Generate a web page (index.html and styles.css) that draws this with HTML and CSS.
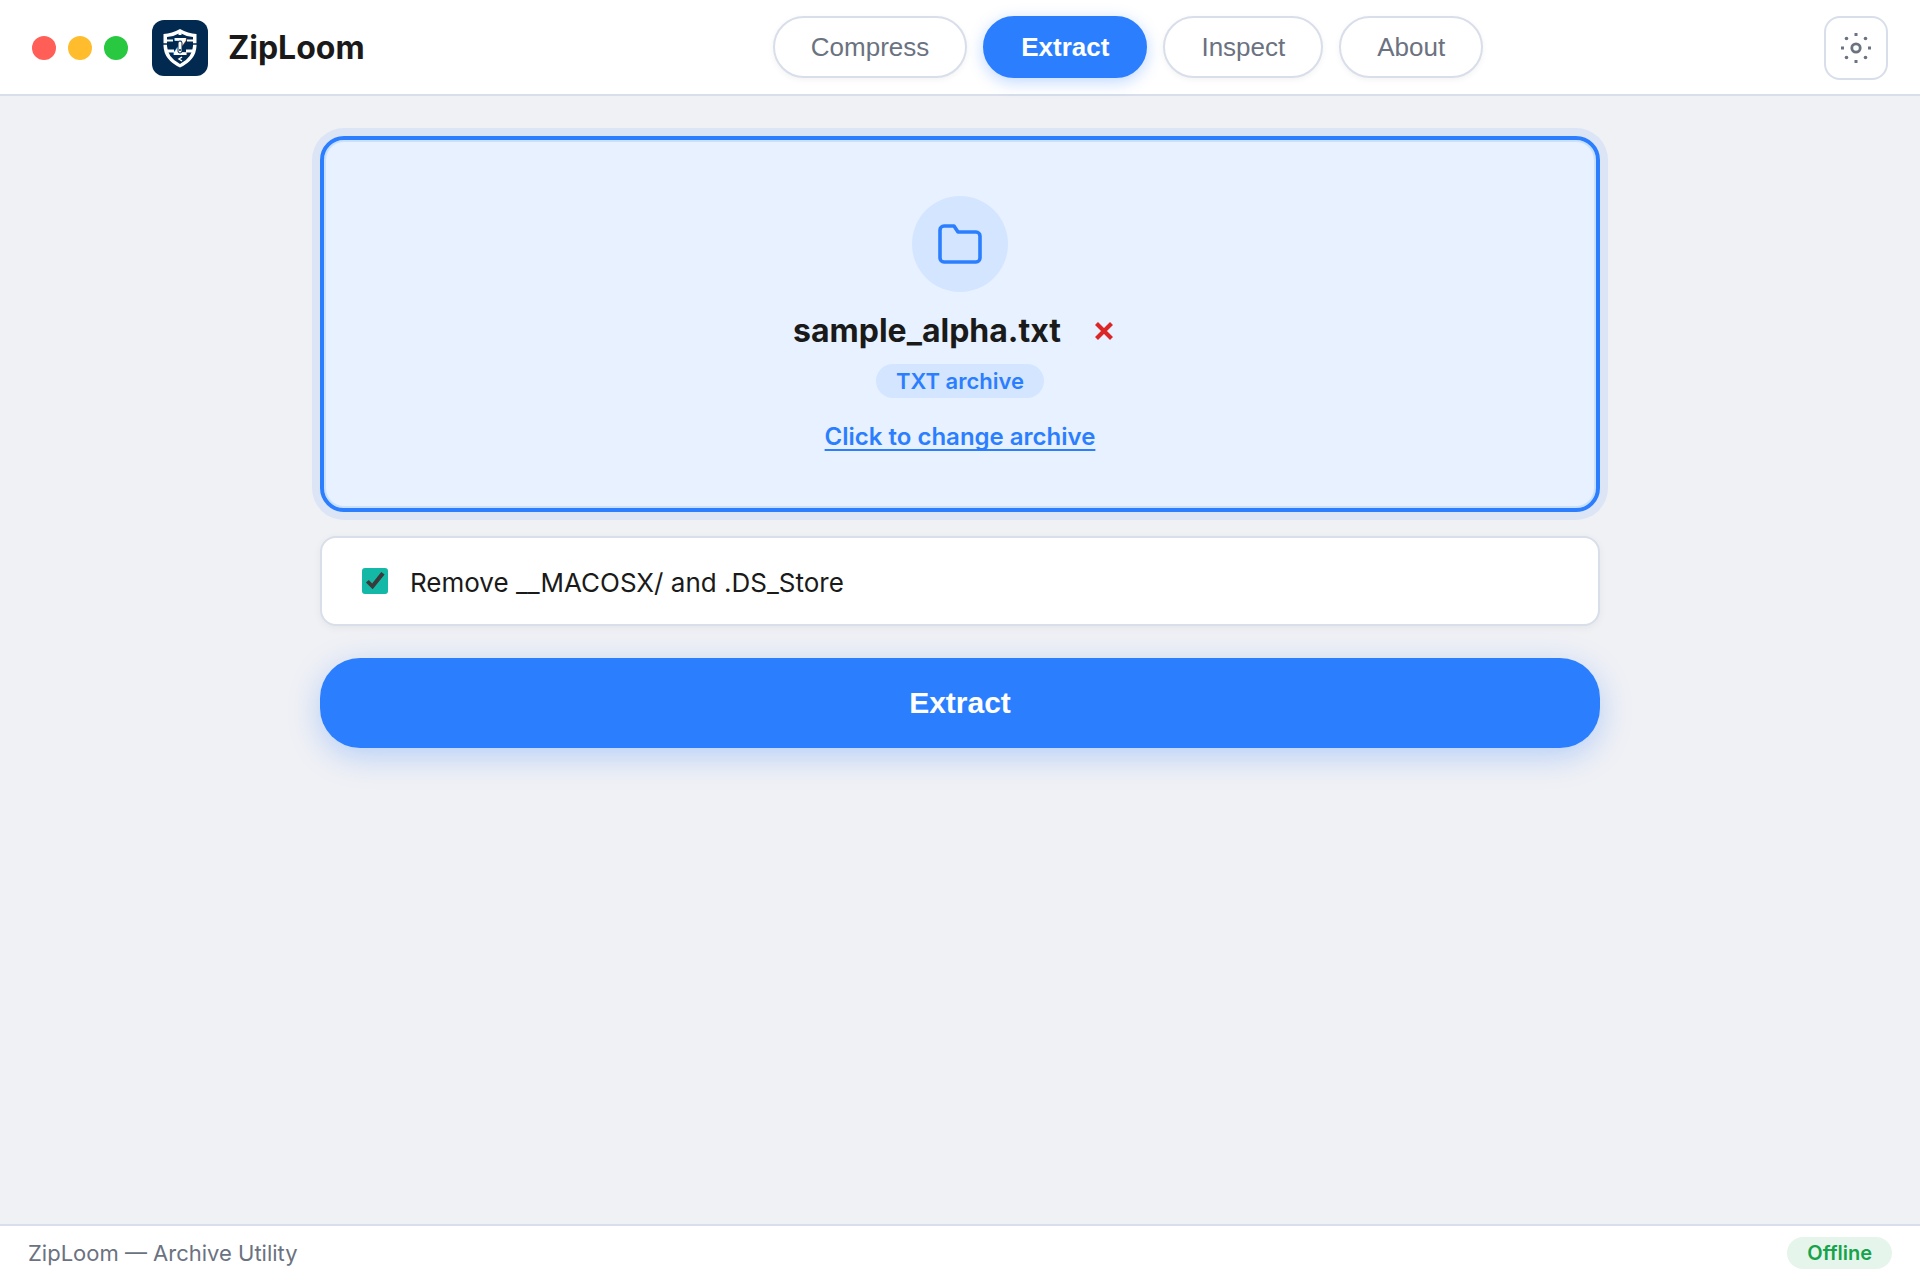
FILE: index.html
```
<!DOCTYPE html>
<html lang="en">

<head>
	<meta charset="UTF-8">
	<meta name="viewport" content="width=device-width, initial-scale=1">
	<title>ZipLoom</title>

	<link rel="stylesheet" href="styles.css">
</head>

<body>

	<header class="topbar">
		<div class="brand">
			<div class="lights">
				<span class="light red"></span>
				<span class="light yellow"></span>
				<span class="light green"></span>
			</div>
			<svg class="logo" viewBox="0 0 56 56" aria-hidden="true">
				<rect width="56" height="56" rx="12" fill="#022a50" />
				<path d="M28 9 Q36 13.500 44.500 14 V26 Q44 40 28 47.500 Q12 40 11.500 26 V14 Q20 13.500 28 9Z" fill="#fff" />
				<path d="M28 13 Q34 16.500 41 17 V26 Q40.500 37.500 28 44 Q15.500 37.500 15 26 V17 Q22 16.500 28 13Z" fill="#022a50" />
				<path d="M28 10v5M15 31h7M34 31h7" stroke="#fff" stroke-width="3" />
				<path d="M11 24h8M37 24h8" stroke="#022a50" stroke-width="1.500" />
				<path d="M15 20.500h6M35 20.500h6" stroke="#fff" stroke-width="2" />
				<text x="28" y="35" class="logo-letter">Z</text>
				<rect x="26" y="21" width="4" height="12" rx="2" fill="#fff" stroke="#022a50" stroke-width="1" />
				<circle cx="28" cy="30" r="1" fill="#022a50" />
				<path d="M30 37l-3 2 3 2" fill="none" stroke="#fff" stroke-width="1.500" />
			</svg>
			<h1>ZipLoom</h1>
		</div>

		<nav class="tabs">
			<button type="button">Compress</button>
			<button type="button" class="active">Extract</button>
			<button type="button">Inspect</button>
			<button type="button">About</button>
		</nav>

		<button type="button" class="settings" aria-label="Settings">
			<svg viewBox="0 0 32 32" width="32" height="32">
				<circle cx="16" cy="16" r="4.200" fill="none" stroke="#6b7280" stroke-width="2.800" />
				<g fill="#6b7280">
					<rect x="14.500" y="1" width="3" height="3" />
					<rect x="14.500" y="28" width="3" height="3" />
					<rect x="1" y="14.500" width="3" height="3" />
					<rect x="28" y="14.500" width="3" height="3" />
					<circle cx="6.500" cy="6.500" r="1.800" />
					<circle cx="25.500" cy="6.500" r="1.800" />
					<circle cx="6.500" cy="25.500" r="1.800" />
					<circle cx="25.500" cy="25.500" r="1.800" />
				</g>
			</svg>
		</button>
	</header>

	<main>
		<section class="dropzone">
			<div class="folder">
				<svg viewBox="0 0 24 24" width="48" height="48">
					<path d="M22 19a2 2 0 0 1-2 2H4a2 2 0 0 1-2-2V5a2 2 0 0 1 2-2h5l2 3h9a2 2 0 0 1 2 2z" fill="none" stroke="#2b7fff" stroke-width="1.800" stroke-linejoin="round" />
				</svg>
			</div>
			<div class="file">
				<span class="filename">sample_alpha.txt</span>
				<button type="button" class="remove" aria-label="Remove file">
					<svg viewBox="0 0 18 18" width="18" height="18">
						<path d="M1.500 1.500l15 15M16.500 1.500l-15 15" stroke="#dc2626" stroke-width="4.200" />
					</svg>
				</button>
			</div>
			<span class="type">TXT archive</span>
			<a href="#" class="change">Click to change archive</a>
		</section>

		<div class="options">
			<input type="checkbox" id="clean" checked>
			<label for="clean">Remove __MACOSX/ and .DS_Store</label>
		</div>

		<button type="button" class="submit">Extract</button>
	</main>

	<footer>
		<span>ZipLoom — Archive Utility</span>
		<span class="status">Offline</span>
	</footer>

</body>

</html>
```
FILE: styles.css
```
* {
	box-sizing: border-box;
}

body {
	display: flex;
	flex-direction: column;
	min-height: 100vh;
	margin: 0;
	background-color: #f0f1f5;
	color: #1a1a1a;
	font-family: Inter, "Liberation Sans", sans-serif;
}

button {
	font-family: "Liberation Sans", Arial, sans-serif;
	cursor: pointer;
}

svg {
	display: block;
}

.topbar {
	display: flex;
	align-items: center;
	padding: 16px 32px 14px;
	background-color: #fff;
	border-bottom: 2px solid #d8deea;
}

.brand {
	display: flex;
	align-items: center;
	gap: 20px;
	min-width: 400px;
}

.lights {
	display: flex;
	gap: 12px;
	margin-right: 4px;
}

.light {
	width: 24px;
	height: 24px;
	border-radius: 50%;
}

.red {
	background-color: #ff5f57;
}

.yellow {
	background-color: #ffbd2e;
}

.green {
	background-color: #28c940;
}

.logo {
	width: 56px;
	height: 56px;
}

.logo-letter {
	font-family: "Liberation Sans", sans-serif;
	font-size: 23px;
	font-weight: bold;
	fill: #fff;
	text-anchor: middle;
}

h1 {
	margin: 0;
	font-size: 32px;
	line-height: 40px;
	font-weight: 700;
}

.tabs {
	display: flex;
	flex: 1;
	justify-content: center;
	align-self: flex-start;
	gap: 16px;
}

.tabs button {
	padding: 14px 36px;
	font-size: 26px;
	line-height: 30px;
	color: #6b7280;
	background-color: #fff;
	border: 2px solid #d8deea;
	border-radius: 32px;
	box-shadow: 0 2px 6px rgba(0, 0, 0, 0.05);
}

.tabs .active {
	font-weight: bold;
	color: #fff;
	background-color: #2b7fff;
	border-color: #2b7fff;
	box-shadow: 0 4px 16px rgba(43, 127, 255, 0.3);
}

.settings {
	display: flex;
	align-items: center;
	justify-content: center;
	width: 64px;
	height: 64px;
	padding: 0;
	background-color: #fff;
	border: 2px solid #d8deea;
	border-radius: 16px;
}

main {
	display: flex;
	flex: 1;
	flex-direction: column;
	width: 100%;
	max-width: 1344px;
	margin: 0 auto;
	padding: 40px 32px;
}

.dropzone {
	display: flex;
	flex-direction: column;
	align-items: center;
	padding: 56px;
	background-color: #e7f1ff;
	border: 4px solid #2b7fff;
	border-radius: 24px;
	box-shadow: 0 0 0 8px rgba(43, 127, 255, 0.1), inset 0 0 0 2px rgba(43, 127, 255, 0.15);
}

.folder {
	display: flex;
	align-items: center;
	justify-content: center;
	width: 96px;
	height: 96px;
	border-radius: 50%;
	background-color: #d4e5ff;
}

.file {
	display: flex;
	align-items: center;
	gap: 20px;
	margin: 19px 0 13px;
}

.filename {
	font-size: 32px;
	line-height: 40px;
	font-weight: 700;
}

.remove {
	padding: 11px 14px;
	background: none;
	border: 0;
}

.type {
	padding: 4px 20px;
	font-size: 22px;
	line-height: 26px;
	font-weight: 600;
	color: #2b7fff;
	background-color: #d4e5ff;
	border-radius: 20px;
}

.change {
	margin-top: 24px;
	font-size: 24px;
	line-height: 30px;
	font-weight: 600;
	color: #2b7fff;
	text-decoration-thickness: 2px;
	text-underline-offset: 4px;
	text-decoration-skip-ink: none;
}

.options {
	display: flex;
	align-items: center;
	gap: 22px;
	margin-top: 24px;
	padding: 26px 40px;
	background-color: #fff;
	border: 2px solid #d8deea;
	border-radius: 16px;
	box-shadow: 0 2px 8px rgba(0, 0, 0, 0.05);
}

.options input {
	appearance: none;
	width: 26px;
	height: 26px;
	margin: 0;
	border-radius: 3px;
	background-color: #14b8a6;
}

.options input:checked::before {
	content: "";
	display: block;
	width: 26px;
	height: 26px;
	background-color: #3a3a3a;
	clip-path: polygon(15% 56%, 26% 46%, 39% 60%, 74% 15%, 87% 25%, 41% 82%);
}

.options label {
	padding-top: 4px;
	font-size: 26px;
	line-height: 30px;
}

.submit {
	margin-top: 32px;
	padding: 28px;
	font-size: 30px;
	line-height: 34px;
	font-weight: bold;
	color: #fff;
	background-color: #2b7fff;
	border: 0;
	border-radius: 40px;
	box-shadow: 0 8px 32px rgba(43, 127, 255, 0.3);
}

footer {
	display: flex;
	align-items: center;
	justify-content: space-between;
	padding: 11px 28px;
	font-size: 22px;
	line-height: 32px;
	color: #6b7280;
	background-color: #fff;
	border-top: 2px solid #d8deea;
}

.status {
	padding: 0 20px;
	font-size: 20px;
	font-weight: 600;
	color: #16a34a;
	background-color: #e6f5ec;
	border-radius: 16px;
}
```
